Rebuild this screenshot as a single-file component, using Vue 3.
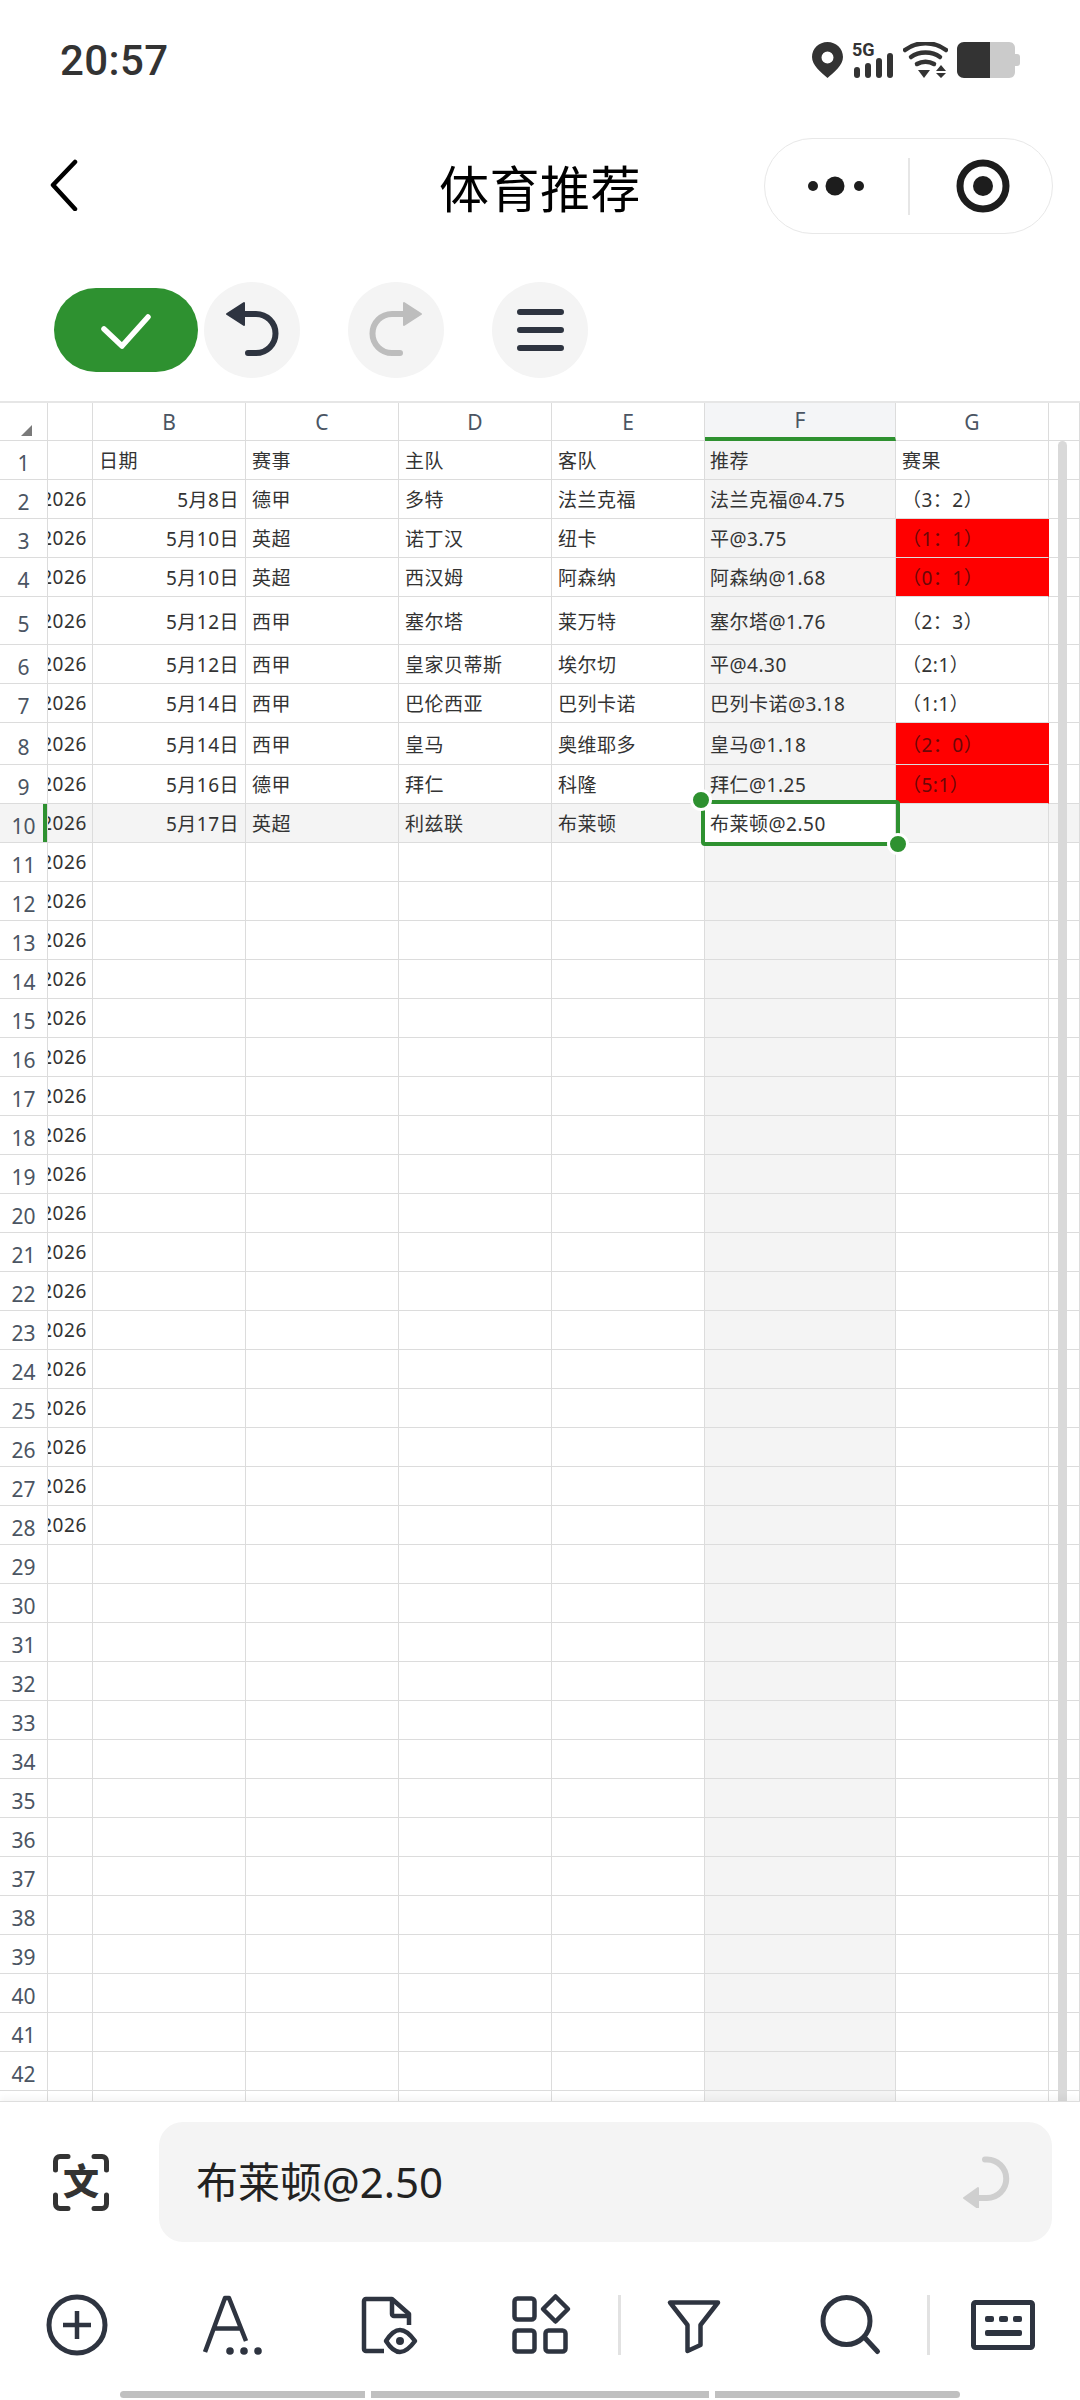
<template>
  <div class="page">
    <!-- status bar -->
    <div class="status">
      <span class="time">20:57</span>
      <div class="status-icons">
        <svg width="31" height="36" viewBox="0 0 31 36"><path fill-rule="evenodd" fill="#333" d="M15.500 0C7 0 0 6.500 0 15c0 8 9 15.500 15.500 21C22 30.500 31 23 31 15 31 6.500 24 0 15.500 0Zm0 9.500a6 6 0 1 1 0 12 6 6 0 0 1 0-12Z"/></svg>
        <svg width="42" height="36" viewBox="0 0 42 36">
          <text x="0" y="14" class="five-g">5G</text>
          <rect x="2" y="25" width="6" height="11" rx="3" fill="#333"/>
          <rect x="13" y="21" width="6" height="15" rx="3" fill="#333"/>
          <rect x="24" y="16" width="6" height="20" rx="3" fill="#333"/>
          <rect x="35" y="11" width="6" height="25" rx="3" fill="#333"/>
        </svg>
        <svg width="45" height="36" viewBox="0 0 45 36" fill="none" stroke="#333" stroke-width="4.500" stroke-linecap="round">
          <path d="M2 8C14 -1 31 -1 43 8"/>
          <path d="M8 15c8-6 21-6 29 0"/>
          <path d="M14 22c5-3 12-3 17 0"/>
          <path d="M15 28h12l-6 8Z" fill="#333" stroke="none"/>
          <path d="M38 23l5 6H33Z M33 31h10l-5 5Z" fill="#333" stroke="none"/>
        </svg>
        <svg width="63" height="36" viewBox="0 0 63 36">
          <path d="M33 0h19c4 0 6 3 6 6v6h2c2 0 3 1 3 3v6c0 2-1 3-3 3h-2v6c0 3-2 6-6 6H33Z" fill="#cbcbcb"/>
          <path d="M33 0H7C3 0 0 3 0 7v22c0 4 3 7 7 7h26Z" fill="#333"/>
        </svg>
      </div>
    </div>

    <!-- nav bar -->
    <div class="nav">
      <svg class="back" width="28" height="52" viewBox="0 0 28 52" fill="none" stroke="#000" stroke-width="4.500" stroke-linecap="round" stroke-linejoin="round"><path d="M25 3 3 26l22 24"/></svg>
      <div class="title">体育推荐</div>
      <div class="capsule">
        <svg width="60" height="20" viewBox="0 0 60 20" fill="#1d1d1d">
          <circle cx="7" cy="10" r="5"/><circle cx="29" cy="10" r="9.500"/><circle cx="53" cy="10" r="5"/>
        </svg>
        <i class="capsule-line"></i>
        <svg width="54" height="54" viewBox="0 0 54 54">
          <circle cx="27" cy="27" r="23" fill="none" stroke="#1d1d1d" stroke-width="7"/>
          <circle cx="27" cy="27" r="10" fill="#1d1d1d"/>
        </svg>
      </div>
    </div>

    <!-- edit actions -->
    <div class="actions">
      <button class="confirm">
        <svg width="144" height="84" viewBox="0 0 144 84" fill="none" stroke="#fff" stroke-width="5.500" stroke-linecap="round" stroke-linejoin="round"><path d="M50 41 68 58 94 29"/></svg>
      </button>
      <button class="round first">
        <svg width="96" height="96" viewBox="0 0 96 96" fill="none" stroke="#2e3440" stroke-width="6" stroke-linecap="round">
          <path d="M38 32H52a19.500 19.500 0 0 1 0 39H44"/>
          <path d="M23 32 40 21V43Z" fill="#2e3440" stroke-width="2" stroke-linejoin="round"/>
        </svg>
      </button>
      <button class="round">
        <svg width="96" height="96" viewBox="0 0 96 96" fill="none" stroke="#bdbdbd" stroke-width="6" stroke-linecap="round">
          <path d="M58 32H44a19.500 19.500 0 0 0 0 39H52"/>
          <path d="M73 32 56 21V43Z" fill="#bdbdbd" stroke-width="2" stroke-linejoin="round"/>
        </svg>
      </button>
      <button class="round">
        <svg width="96" height="96" viewBox="0 0 96 96" fill="none" stroke="#2e3440" stroke-width="6" stroke-linecap="round">
          <path d="M28 30H69M28 48H69M28 66H69"/>
        </svg>
      </button>
    </div>

    <!-- sheet -->
    <div class="sheet">
      <div class="row head-row">
        <div class="cell rowhead corner"><i class="triangle"></i></div>
        <div class="cell colhead"></div>
        <div v-for="c in letters" :key="c" class="cell colhead" :class="{ active: c == 'F' }">{{ c }}</div>
        <div class="cell tail"></div>
      </div>
      <div
        v-for="(row, i) in rows"
        :key="i"
        class="row"
        :class="{ current: i == 9 }"
        :style="{ height: row.h + 'px' }"
      >
        <div class="cell rowhead">{{ i + 1 }}</div>
        <div class="cell year">{{ i > 0 && i < 28 ? '2026' : '' }}</div>
        <div class="cell" :class="{ date: i > 0 }">{{ row.d[1] }}</div>
        <div class="cell" v-for="n in [2, 3, 4]" :key="n">{{ row.d[n] }}</div>
        <div class="cell pick" :class="{ selected: i == 9 }">{{ row.d[5] }}</div>
        <div class="cell" :class="{ miss: row.miss }">{{ row.d[6] }}</div>
        <div class="cell tail"></div>
      </div>
      <div class="selection"><i class="handle tl"></i><i class="handle br"></i></div>
      <div class="scrollbar"></div>
    </div>

    <!-- bottom panel -->
    <div class="panel">
      <div class="formula">
        <svg class="scan" width="56" height="57" viewBox="0 0 56 57">
          <path d="M2.500 16V7a4.500 4.500 0 0 1 4.500-4.500H15M41 2.500H49a4.500 4.500 0 0 1 4.500 4.500V16M2.500 41V50a4.500 4.500 0 0 0 4.500 4.500H15M41 54.500H49a4.500 4.500 0 0 0 4.500-4.500V41" fill="none" stroke="#333" stroke-width="5" stroke-linecap="round"/>
          <text x="28" y="41" text-anchor="middle" class="scan-char">文</text>
        </svg>
        <div class="formula-input">
          <span class="formula-text">布莱顿@2.50</span>
          <svg width="48" height="52" viewBox="0 0 48 52" fill="none" stroke="#cfcfcf" stroke-width="6" stroke-linecap="round">
            <path d="M22 3.500H24a19 19 0 0 1 0 38.500H14"/>
            <path d="M1 42 15 32V52Z" fill="#cfcfcf" stroke-width="2" stroke-linejoin="round"/>
          </svg>
        </div>
      </div>

      <div class="tools">
        <svg width="64" height="64" viewBox="0 0 64 64" fill="none" stroke="#2e3440" stroke-width="5">
          <circle cx="32" cy="32" r="28"/><path d="M18 32H46M32 18V46" stroke-width="4.500"/>
        </svg>
        <svg width="64" height="64" viewBox="0 0 64 64" fill="none" stroke="#2e3440" stroke-width="4.500" stroke-linejoin="round">
          <path d="M5 59 25 5h4L46 48M15 35.500H40"/>
          <g fill="#2e3440" stroke="none"><circle cx="30" cy="58" r="3.800"/><circle cx="44" cy="58" r="3.800"/><circle cx="58" cy="58" r="3.800"/></g>
        </svg>
        <svg width="64" height="64" viewBox="0 0 64 64" fill="none" stroke="#2e3440" stroke-width="4.500" stroke-linejoin="round">
          <path d="M27 58H9a2 2 0 0 1-2-2V8a2 2 0 0 1 2-2H35L52 21V32"/>
          <path d="M35 6V21a2 2 0 0 0 2 2H52"/>
          <path d="M29 48Q36 37 43 37T58 48Q50 59 43 59T29 48Z"/>
          <circle cx="43" cy="48" r="4" fill="#2e3440" stroke="none"/>
        </svg>
        <svg width="64" height="64" viewBox="0 0 64 64" fill="none" stroke="#2e3440" stroke-width="4.500" stroke-linejoin="round">
          <rect x="5.500" y="5.500" width="20" height="21" rx="3"/>
          <rect x="5.500" y="37.500" width="20" height="21" rx="3"/>
          <rect x="36.500" y="37.500" width="20" height="21" rx="3"/>
          <path d="M46.500 3.500 59 16 46.500 28.500 34 16Z"/>
        </svg>
        <i class="tool-line"></i>
        <svg width="64" height="64" viewBox="0 0 64 64" fill="none" stroke="#2e3440" stroke-width="4.500" stroke-linejoin="round">
          <path d="M8 9.500H56L38.500 32V52L25.500 58V32Z"/>
        </svg>
        <svg width="64" height="64" viewBox="0 0 64 64" fill="none" stroke="#2e3440" stroke-width="5" stroke-linecap="round">
          <circle cx="28.500" cy="28" r="23.500"/><path d="M47 45 59.500 58.500"/>
        </svg>
        <i class="tool-line"></i>
        <svg width="64" height="64" viewBox="0 0 64 64" fill="none" stroke="#2e3440" stroke-width="5" stroke-linejoin="round">
          <rect x="2.500" y="9.500" width="59" height="45" rx="2"/>
          <g fill="#2e3440" stroke="none">
            <rect x="14" y="23" width="9" height="6" rx="2"/><rect x="28" y="23" width="9" height="6" rx="2"/><rect x="42" y="23" width="9" height="6" rx="2"/>
            <rect x="14" y="37" width="37" height="6" rx="2"/>
          </g>
        </svg>
      </div>

      <div class="home">
        <i class="home-a"></i><i class="home-b"></i><i class="home-c"></i>
      </div>
    </div>
  </div>
</template>

<script setup>
const letters = ['B', 'C', 'D', 'E', 'F', 'G']

const data = [
  ['', '日期', '赛事', '主队', '客队', '推荐', '赛果'],
  ['', '5月8日', '德甲', '多特', '法兰克福', '法兰克福@4.75', '（3：2）'],
  ['', '5月10日', '英超', '诺丁汉', '纽卡', '平@3.75', '（1：1）'],
  ['', '5月10日', '英超', '西汉姆', '阿森纳', '阿森纳@1.68', '（0：1）'],
  ['', '5月12日', '西甲', '塞尔塔', '莱万特', '塞尔塔@1.76', '（2：3）'],
  ['', '5月12日', '西甲', '皇家贝蒂斯', '埃尔切', '平@4.30', '（2:1）'],
  ['', '5月14日', '西甲', '巴伦西亚', '巴列卡诺', '巴列卡诺@3.18', '（1:1）'],
  ['', '5月14日', '西甲', '皇马', '奥维耶多', '皇马@1.18', '（2：0）'],
  ['', '5月16日', '德甲', '拜仁', '科隆', '拜仁@1.25', '（5:1）'],
  ['', '5月17日', '英超', '利兹联', '布莱顿', '布莱顿@2.50', '']
]

const tall = { 4: 48, 7: 42 }
const missed = [2, 3, 7, 8]

// 43 行，最后一行被底部面板盖住
const rows = Array.from({ length: 43 }, (_, i) => ({
  h: tall[i] || 39,
  d: data[i] || [],
  miss: missed.includes(i)
}))
</script>

<style scoped>
.page {
  width: 1080px;
  height: 2400px;
  overflow: hidden;
  background: #fff;
  font-family: "Noto Sans", "Noto Sans CJK SC", sans-serif;
  color: #333;
}

i {
  display: block;
}

button {
  border: none;
  padding: 0;
  display: block;
}

svg {
  display: block;
}

.status {
  height: 120px;
  padding: 0 60px;
  display: flex;
  align-items: center;
  justify-content: space-between;
}

.time {
  font-family: Roboto, sans-serif;
  font-size: 42px;
  font-weight: 500;
  letter-spacing: 0.4px;
  color: #333;
}

.status-icons {
  display: flex;
  align-items: center;
  gap: 9px;
}

.five-g {
  font-family: Roboto, sans-serif;
  font-size: 18px;
  font-weight: 700;
  fill: #333;
}

.nav {
  margin-top: 18px;
  height: 96px;
  display: grid;
  grid-template-columns: 1fr auto 1fr;
  align-items: center;
}

.back {
  margin-left: 50px;
  margin-top: -3px;
}

.title {
  font-family: "Noto Sans CJK SC", sans-serif;
  font-size: 50px;
  letter-spacing: 0.5px;
  color: #000;
  line-height: 96px;
}

.capsule {
  justify-self: end;
  box-sizing: border-box;
  width: 289px;
  height: 96px;
  margin-right: 27px;
  border: 1.5px solid #e8e8e8;
  border-radius: 48px;
  display: flex;
  align-items: center;
  padding-left: 41px;
}

.capsule-line {
  width: 1.5px;
  height: 57px;
  background: #e6e6e6;
  margin: 0 46px 0 42px;
}

.actions {
  margin-top: 48px;
  height: 96px;
  padding-left: 54px;
  display: flex;
  align-items: center;
  gap: 48px;
}

.confirm {
  width: 144px;
  height: 84px;
  border-radius: 42px;
  background: #2e9130;
  margin-right: -42px;
}

.round {
  width: 96px;
  height: 96px;
  border-radius: 50%;
  background: #f4f4f4;
}

.sheet {
  position: relative;
  margin-top: 23px;
  height: 1700px;
  overflow: hidden;
  border-top: 2px solid #e6e6e6;
  box-sizing: border-box;
}

.row {
  display: grid;
  grid-template-columns: 48px 45px 153px 153px 153px 153px 191px 153px 31px;
  height: 39px;
}

.head-row {
  height: 38px;
}

.cell {
  box-sizing: border-box;
  border-right: 1px solid #dcdcdc;
  border-bottom: 1px solid #dcdcdc;
  padding: 0 6px;
  font-size: 19px;
  letter-spacing: 0.5px;
  white-space: nowrap;
  overflow: hidden;
  display: flex;
  align-items: center;
}

.rowhead,
.colhead {
  justify-content: center;
  padding: 0;
  font-size: 21px;
  font-weight: 400;
  letter-spacing: 0;
  color: #4b5563;
}

.rowhead {
  padding-top: 6px;
}

.corner {
  padding: 0;
}

.triangle {
  width: 0;
  height: 0;
  margin: 17px -6px 0 0;
  border-left: 11px solid transparent;
  border-bottom: 11px solid #7a7a7a;
}

.colhead.active {
  background: #f4f5f7;
  border-bottom: 4px solid #2e9130;
}

.year {
  justify-content: flex-end;
  padding: 0 5px 0 0;
  letter-spacing: 0.6px;
}

.date {
  justify-content: flex-end;
  padding-right: 6px;
}

.pick {
  background: #f4f4f4;
  padding-left: 5px;
}

.tail {
  padding: 0;
}

.current .cell {
  background: #f4f4f4;
}

.current .rowhead {
  box-shadow: inset -4px 0 0 #2e9130;
}

.current .cell.selected {
  background: #fff;
}

.miss {
  background: #ff0000;
  color: #6a0808;
  border-right-color: #ff0000;
}

.selection {
  position: absolute;
  top: 397px;
  left: 701px;
  width: 199px;
  height: 46px;
  box-sizing: border-box;
  border: 4px solid #2e9130;
  border-radius: 4px;
}

.handle {
  position: absolute;
  box-sizing: content-box;
  width: 16px;
  height: 16px;
  border: 3.5px solid #fff;
  border-radius: 50%;
  background: #2e9130;
}

.tl {
  top: -15px;
  left: -15px;
}

.br {
  right: -13px;
  bottom: -13px;
}

.scrollbar {
  position: absolute;
  top: 38px;
  bottom: 0;
  left: 1058px;
  width: 9px;
  border-radius: 5px 5px 0 0;
  background: #d9d9d9;
}

.panel {
  position: relative;
  height: 299px;
  background: #fff;
  border-top: 1px solid #dedede;
  box-shadow: 0 -4px 6px rgba(0, 0, 0, 0.04);
  box-sizing: border-box;
}

.formula {
  margin-top: 0;
  padding: 20px 28px 0 53px;
  display: flex;
  align-items: center;
  gap: 50px;
}

.formula-input {
  flex: 1;
  height: 120px;
  border-radius: 24px;
  background: #f4f4f4;
  display: flex;
  align-items: center;
  justify-content: space-between;
  padding: 0 41px 0 38px;
  font-size: 42px;
  color: #222;
}

.formula-text {
  margin-top: -6px;
  margin-left: -1px;
}

.scan-char {
  font-family: "Noto Sans CJK SC", sans-serif;
  font-size: 36px;
  font-weight: 900;
  fill: #333;
}

.tools {
  margin-top: 51px;
  padding-left: 45px;
  height: 64px;
  display: grid;
  grid-template-columns: 155px 157px 152px 109px 44px 156px 109px 44px 64px;
  align-items: center;
}

.tool-line {
  width: 2.5px;
  height: 60px;
  background: #e2e2e2;
}

.home {
  margin-top: 34px;
  padding-left: 120px;
  display: flex;
  gap: 6px;
}

.home i {
  height: 7px;
  background: #c0c0c0;
}

.home-a {
  width: 245px;
  border-radius: 4px 0 0 4px;
}

.home-b {
  width: 338px;
}

.home-c {
  width: 245px;
  border-radius: 0 4px 4px 0;
}
</style>
